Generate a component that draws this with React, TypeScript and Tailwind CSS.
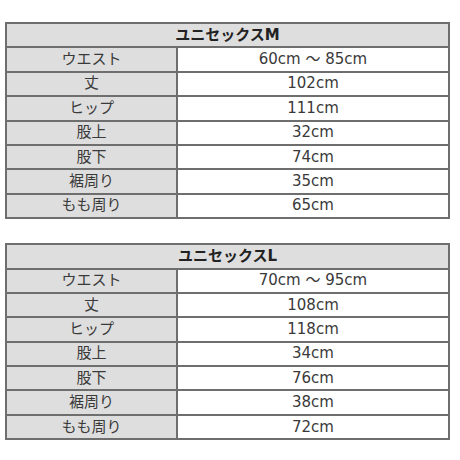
const sizes = [
  {
    title: "ユニセックスM",
    rows: [
      ["ウエスト", "60cm 〜 85cm"],
      ["丈", "102cm"],
      ["ヒップ", "111cm"],
      ["股上", "32cm"],
      ["股下", "74cm"],
      ["裾周り", "35cm"],
      ["もも周り", "65cm"],
    ],
  },
  {
    title: "ユニセックスL",
    rows: [
      ["ウエスト", "70cm 〜 95cm"],
      ["丈", "108cm"],
      ["ヒップ", "118cm"],
      ["股上", "34cm"],
      ["股下", "76cm"],
      ["裾周り", "38cm"],
      ["もも周り", "72cm"],
    ],
  },
];

const SizeTable: React.FC<{ title: string; rows: string[][] }> = ({ title, rows }) => (
  <table className="w-[445px] border-collapse border-2 border-[#6e6e6e] text-[15px] text-[#3a3a3a] table-fixed">
    <colgroup>
      <col className="w-[171px]" />
      <col />
    </colgroup>
    <thead>
      <tr className="h-[24.4px]">
        <th colSpan={2} className="border-2 border-[#6e6e6e] bg-[#dedede] p-0 text-center font-bold leading-none text-[#222]">
          {title}
        </th>
      </tr>
    </thead>
    <tbody>
      {rows.map(([label, value]) => (
        <tr key={label} className="h-[24.4px]">
          <td className="border-2 border-[#6e6e6e] bg-[#dedede] p-0 text-center leading-none">{label}</td>
          <td className="border-2 border-[#6e6e6e] bg-white p-0 text-center leading-none">{value}</td>
        </tr>
      ))}
    </tbody>
  </table>
);

export default function App() {
  return (
    <div
      className="w-[460px] h-[460px] bg-white pt-[22px] pl-[5px] flex flex-col gap-[24px]"
      style={{ fontFamily: '"DejaVu Sans", "Noto Sans CJK JP", sans-serif' }}
    >
      {sizes.map((s) => (
        <SizeTable key={s.title} title={s.title} rows={s.rows} />
      ))}
    </div>
  );
}
